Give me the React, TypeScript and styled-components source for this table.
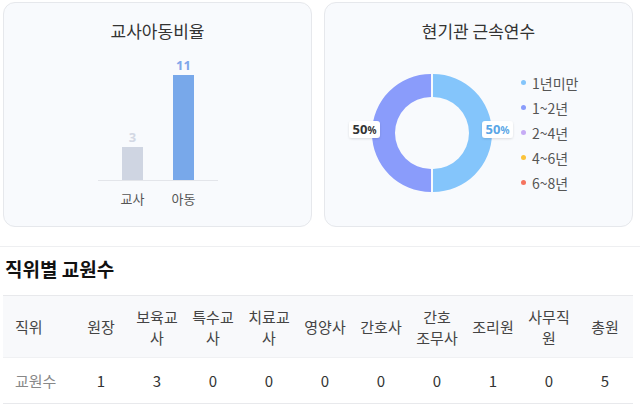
import React from "react";
import styled, { createGlobalStyle } from "styled-components";

const GlobalStyle = createGlobalStyle`
  html, body { margin: 0; padding: 0; background: #ffffff; }
  body { font-family: "Noto Sans CJK KR", "Noto Sans", sans-serif; color: #333; }
`;

const Page = styled.div`
  width: 640px;
  padding-top: 2px;
`;

const CardRow = styled.div`
  display: grid;
  grid-template-columns: 309px 309px;
  gap: 12px;
  margin: 0 7px 0 3px;
`;

const Card = styled.section`
  height: 225px;
  box-sizing: border-box;
  border: 1px solid #e6e8ec;
  border-radius: 12px;
  background: #f8fafd;
  padding-top: 16px;
  display: flex;
  flex-direction: column;
`;

const CardTitle = styled.h3`
  margin: 0;
  font-size: 17px;
  line-height: 24px;
  font-weight: 400;
  text-align: center;
  color: #333;
`;

const ChartSvg = styled.svg`
  display: block;
  flex: none;
`;

const DonutBody = styled.div`
  display: flex;
  align-items: flex-start;
`;

const Legend = styled.ul`
  list-style: none;
  margin: 0;
  padding: 27px 0 0 6px;
`;

const LegendItem = styled.li<{ $color: string }>`
  display: flex;
  align-items: center;
  height: 25px;
  font-size: 14px;
  color: #555;
  &::before {
    content: "";
    width: 5px;
    height: 5px;
    border-radius: 50%;
    background: ${(p) => p.$color};
    margin-right: 6px;
  }
`;

const Divider = styled.hr`
  margin: 19px 0 0;
  border: none;
  border-top: 1px solid #eeeff1;
`;

const Section = styled.section`
  margin: 0 7px 0 3px;
`;

const SectionTitle = styled.h2`
  margin: 8px 0 13px 2px;
  font-size: 19px;
  line-height: 27px;
  font-weight: 700;
  color: #111;
`;

const Table = styled.table`
  width: 630px;
  table-layout: fixed;
  border-collapse: collapse;
  font-size: 15px;
`;

const HeadRow = styled.tr`
  background: #f8f9fb;
  border-top: 1px solid #e8e9ec;
  border-bottom: 1px solid #f0f1f3;
`;

const BodyRow = styled.tr`
  border-bottom: 1px solid #e8e9ec;
`;

const Th = styled.th<{ $first?: boolean; $keepWords?: boolean }>`
  height: 62px;
  box-sizing: border-box;
  padding: 0 6px 0 ${(p) => (p.$first ? "12px" : "6px")};
  font-weight: 400;
  line-height: 21px;
  color: #444;
  text-align: ${(p) => (p.$first ? "left" : "center")};
  vertical-align: middle;
  word-break: ${(p) => (p.$keepWords ? "keep-all" : "normal")};
`;

const Td = styled.td<{ $first?: boolean }>`
  height: 45px;
  padding: 0 6px 0 ${(p) => (p.$first ? "12px" : "6px")};
  line-height: 21px;
  color: ${(p) => (p.$first ? "#888" : "#333")};
  text-align: ${(p) => (p.$first ? "left" : "center")};
  vertical-align: middle;
`;

const legend = [
  { label: "1년미만", color: "#84c5fb" },
  { label: "1~2년", color: "#8a9cfb" },
  { label: "2~4년", color: "#c6abf5" },
  { label: "4~6년", color: "#fbc33b" },
  { label: "6~8년", color: "#f5735f" },
];

const headers = ["직위", "원장", "보육교사", "특수교사", "치료교사", "영양사", "간호사", "간호 조무사", "조리원", "사무직원", "총원"];
const values = ["교원수", "1", "3", "0", "0", "0", "0", "0", "1", "0", "5"];

function BarChart() {
  return (
    <ChartSvg width={307} height={180} viewBox="0 0 307 180">
      <line x1={94} y1={137.5} x2={214} y2={137.5} stroke="#e3e5ea" strokeWidth={1} />
      <rect x={118} y={104} width={21} height={33} fill="#cfd5e2" />
      <rect x={169} y={32} width={21} height={105} fill="#78a8ea" />
      <text x={128.5} y={99} textAnchor="middle" fontSize={13} fontWeight={700} fill="#d3d8e4" fontFamily="Noto Sans, sans-serif">3</text>
      <text x={179.5} y={27} textAnchor="middle" fontSize={13} fontWeight={700} fill="#7ea6ea" fontFamily="Noto Sans, sans-serif">11</text>
      <text x={128.5} y={161} textAnchor="middle" fontSize={13} fill="#555" fontFamily="Noto Sans CJK KR, sans-serif">교사</text>
      <text x={179.5} y={161} textAnchor="middle" fontSize={13} fill="#555" fontFamily="Noto Sans CJK KR, sans-serif">아동</text>
    </ChartSvg>
  );
}

function Donut() {
  const cx = 107;
  const cy = 90;
  const R = 59;
  const r = 36;
  const right = `M ${cx + 1} ${cy - R} A ${R} ${R} 0 0 1 ${cx + 1} ${cy + R} L ${cx + 1} ${cy + r} A ${r} ${r} 0 0 0 ${cx + 1} ${cy - r} Z`;
  const left = `M ${cx - 1} ${cy + R} A ${R} ${R} 0 0 1 ${cx - 1} ${cy - R} L ${cx - 1} ${cy - r} A ${r} ${r} 0 0 0 ${cx - 1} ${cy + r} Z`;
  return (
    <ChartSvg width={190} height={180} viewBox="0 0 190 180">
      <defs>
        <filter id="lblShadow" x="-30%" y="-50%" width="160%" height="200%">
          <feDropShadow dx={0} dy={1} stdDeviation={1.2} floodColor="#000" floodOpacity={0.12} />
        </filter>
      </defs>
      <path d={right} fill="#84c5fb" />
      <path d={left} fill="#8a9cfb" />
      <rect x={24} y={78} width={31} height={17} rx={3} fill="#fff" filter="url(#lblShadow)" />
      <text x={39.5} y={91} textAnchor="middle" fontSize={13} fontWeight={700} fill="#333" fontFamily="Noto Sans, sans-serif">
        50<tspan fontSize={10}>%</tspan>
      </text>
      <rect x={157} y={78} width={31} height={17} rx={3} fill="#fff" filter="url(#lblShadow)" />
      <text x={172.5} y={91} textAnchor="middle" fontSize={13} fontWeight={700} fill="#5aa6e6" fontFamily="Noto Sans, sans-serif">
        50<tspan fontSize={10}>%</tspan>
      </text>
    </ChartSvg>
  );
}

export default function App() {
  return (
    <>
      <GlobalStyle />
      <Page>
        <CardRow>
          <Card>
            <CardTitle>교사아동비율</CardTitle>
            <BarChart />
          </Card>
          <Card>
            <CardTitle>현기관 근속연수</CardTitle>
            <DonutBody>
              <Donut />
              <Legend>
                {legend.map((l) => (
                  <LegendItem key={l.label} $color={l.color}>{l.label}</LegendItem>
                ))}
              </Legend>
            </DonutBody>
          </Card>
        </CardRow>
        <Divider />
        <Section>
          <SectionTitle>직위별 교원수</SectionTitle>
          <Table>
            <colgroup>
              <col style={{ width: 70 }} />
              {headers.slice(1).map((h) => (
                <col key={h} style={{ width: 56 }} />
              ))}
            </colgroup>
            <thead>
              <HeadRow>
                {headers.map((h, i) => (
                  <Th key={h} $first={i === 0} $keepWords={h.includes(" ")}>{h}</Th>
                ))}
              </HeadRow>
            </thead>
            <tbody>
              <BodyRow>
                {values.map((v, i) => (
                  <Td key={i} $first={i === 0}>{v}</Td>
                ))}
              </BodyRow>
            </tbody>
          </Table>
        </Section>
      </Page>
    </>
  );
}
